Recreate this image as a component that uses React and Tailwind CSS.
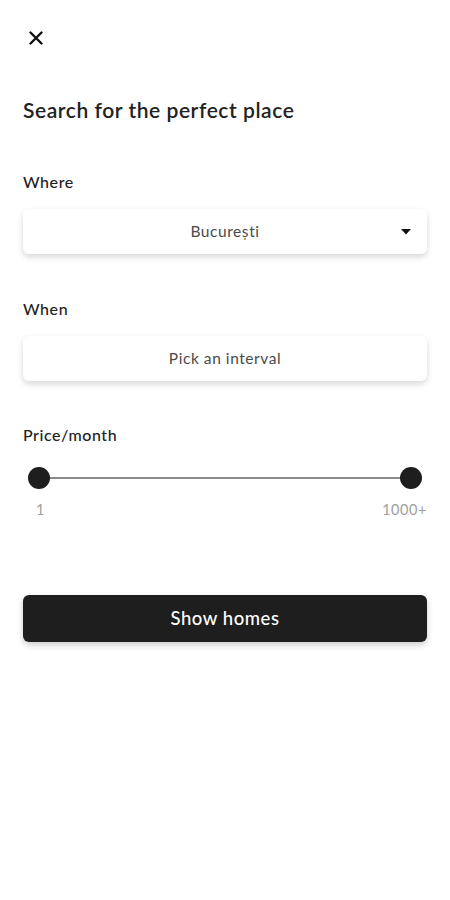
import React from 'react';

function CloseIcon() {
  return (
    <svg width="14" height="14" viewBox="0 0 14 14" fill="none">
      <path d="M1.5 1.5l11 11M12.5 1.5l-11 11" stroke="#111" strokeWidth="2.4" strokeLinecap="round" />
    </svg>
  );
}

function Field({ label, value, arrow }) {
  return (
    <div>
      <div className="text-[16px] text-[#222] font-medium leading-5">{label}</div>
      <div className="relative mt-[17px] h-[45px] rounded-md bg-white shadow-[0_3px_6px_rgba(0,0,0,0.16)] flex items-center justify-center">
        <span className="text-[15.5px] text-[#4a4a4a]">{value}</span>
        {arrow && (
          <svg className="absolute right-[16px] top-1/2 -translate-y-1/2" width="10" height="6" viewBox="0 0 10 6">
            <path d="M0 0h10L5 5.5z" fill="#111" />
          </svg>
        )}
      </div>
    </div>
  );
}

export default function App() {
  return (
    <div className="min-h-[900px] w-[450px] bg-white px-[23px] tracking-[0.035em] font-['Lato','Noto_Sans',sans-serif]">
      <div className="pt-[31px] pl-[6px]">
        <CloseIcon />
      </div>
      <h1 className="mt-[53px] text-[21px] font-semibold text-[#222] leading-6">Search for the perfect place</h1>

      <div className="mt-[50px]">
        <Field label="Where" value="București" arrow />
      </div>
      <div className="mt-[45px]">
        <Field label="When" value="Pick an interval" />
      </div>

      <div className="mt-[44px]">
        <div className="text-[16px] text-[#222] font-medium leading-5">Price/month</div>
        <div className="relative mt-[21px] h-[24px] mx-[5px]">
          <div className="absolute left-[10px] right-[10px] top-1/2 h-[2px] -translate-y-1/2 bg-[#8a8a8a]" />
          <div className="absolute left-0 top-[1px] w-[22px] h-[22px] rounded-full bg-[#1e1e1e]" />
          <div className="absolute right-0 top-[1px] w-[22px] h-[22px] rounded-full bg-[#1e1e1e]" />
        </div>
        <div className="mt-[10px] flex justify-between text-[14.5px] text-[#a0a0a0] leading-5">
          <span className="pl-[13px]">1</span>
          <span>1000+</span>
        </div>
      </div>

      <button className="mt-[75px] w-full h-[47px] rounded-md bg-[#1e1e1e] text-white text-[18.5px] font-medium shadow-[0_3px_6px_rgba(0,0,0,0.2)]">
        Show homes
      </button>
    </div>
  );
}
